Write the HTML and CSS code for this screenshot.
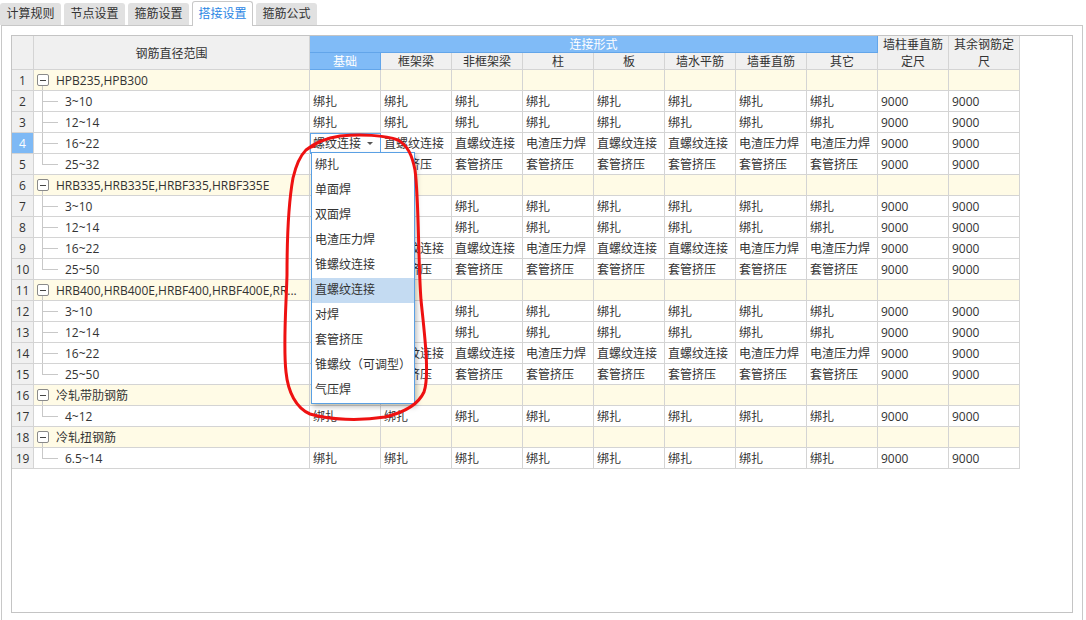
FILE: index.html
```html
<!DOCTYPE html>
<html lang="zh">
<head>
<meta charset="utf-8">
<title>搭接设置</title>
<link rel="stylesheet" href="styles.css">
</head>
<body>
<div class="tabs">
  <div class="tab">计算规则</div>
  <div class="tab">节点设置</div>
  <div class="tab">箍筋设置</div>
  <div class="tab active">搭接设置</div>
  <div class="tab">箍筋公式</div>
</div>
<div class="panel">
  <div class="box">
    <div class="grid">
      <div class="h r2"></div>
      <div class="h r2">钢筋直径范围</div>
      <div class="h hb span8">连接形式</div>
      <div class="h r2">墙柱垂直筋定尺</div>
      <div class="h r2">其余钢筋定尺</div>
      <div class="h hb">基础</div>
      <div class="h">框架梁</div>
      <div class="h">非框架梁</div>
      <div class="h">柱</div>
      <div class="h">板</div>
      <div class="h">墙水平筋</div>
      <div class="h">墙垂直筋</div>
      <div class="h">其它</div>

      <!-- 1 -->
      <div class="rn">1</div><div class="nm g"><i class="tg"></i>HPB235,HPB300</div>
      <div class="c g"></div><div class="c g"></div><div class="c g"></div><div class="c g"></div><div class="c g"></div><div class="c g"></div><div class="c g"></div><div class="c g"></div><div class="c g"></div><div class="c g"></div>
      <!-- 2 -->
      <div class="rn">2</div><div class="nm"><i class="br"></i>3~10</div>
      <div class="c">绑扎</div><div class="c">绑扎</div><div class="c">绑扎</div><div class="c">绑扎</div><div class="c">绑扎</div><div class="c">绑扎</div><div class="c">绑扎</div><div class="c">绑扎</div><div class="c">9000</div><div class="c">9000</div>
      <!-- 3 -->
      <div class="rn">3</div><div class="nm"><i class="br"></i>12~14</div>
      <div class="c">绑扎</div><div class="c">绑扎</div><div class="c">绑扎</div><div class="c">绑扎</div><div class="c">绑扎</div><div class="c">绑扎</div><div class="c">绑扎</div><div class="c">绑扎</div><div class="c">9000</div><div class="c">9000</div>
      <!-- 4 -->
      <div class="rn on">4</div><div class="nm"><i class="br"></i>16~22</div>
      <div class="c sel">
        <div class="combo"><span>螺纹连接</span><i class="caret"></i></div>
        <div class="dd">
          <div class="it">绑扎</div>
          <div class="it">单面焊</div>
          <div class="it">双面焊</div>
          <div class="it">电渣压力焊</div>
          <div class="it">锥螺纹连接</div>
          <div class="it hl">直螺纹连接</div>
          <div class="it">对焊</div>
          <div class="it">套管挤压</div>
          <div class="it">锥螺纹（可调型）</div>
          <div class="it">气压焊</div>
        </div>
      </div>
      <div class="c">直螺纹连接</div><div class="c">直螺纹连接</div><div class="c">电渣压力焊</div><div class="c">直螺纹连接</div><div class="c">直螺纹连接</div><div class="c">电渣压力焊</div><div class="c">电渣压力焊</div><div class="c">9000</div><div class="c">9000</div>
      <!-- 5 -->
      <div class="rn">5</div><div class="nm"><i class="br last"></i>25~32</div>
      <div class="c"></div><div class="c">套管挤压</div><div class="c">套管挤压</div><div class="c">套管挤压</div><div class="c">套管挤压</div><div class="c">套管挤压</div><div class="c">套管挤压</div><div class="c">套管挤压</div><div class="c">9000</div><div class="c">9000</div>
      <!-- 6 -->
      <div class="rn">6</div><div class="nm g"><i class="tg"></i>HRB335,HRB335E,HRBF335,HRBF335E</div>
      <div class="c g"></div><div class="c g"></div><div class="c g"></div><div class="c g"></div><div class="c g"></div><div class="c g"></div><div class="c g"></div><div class="c g"></div><div class="c g"></div><div class="c g"></div>
      <!-- 7 -->
      <div class="rn">7</div><div class="nm"><i class="br"></i>3~10</div>
      <div class="c"></div><div class="c"></div><div class="c">绑扎</div><div class="c">绑扎</div><div class="c">绑扎</div><div class="c">绑扎</div><div class="c">绑扎</div><div class="c">绑扎</div><div class="c">9000</div><div class="c">9000</div>
      <!-- 8 -->
      <div class="rn">8</div><div class="nm"><i class="br"></i>12~14</div>
      <div class="c"></div><div class="c"></div><div class="c">绑扎</div><div class="c">绑扎</div><div class="c">绑扎</div><div class="c">绑扎</div><div class="c">绑扎</div><div class="c">绑扎</div><div class="c">9000</div><div class="c">9000</div>
      <!-- 9 -->
      <div class="rn">9</div><div class="nm"><i class="br"></i>16~22</div>
      <div class="c"></div><div class="c">直螺纹连接</div><div class="c">直螺纹连接</div><div class="c">电渣压力焊</div><div class="c">直螺纹连接</div><div class="c">直螺纹连接</div><div class="c">电渣压力焊</div><div class="c">电渣压力焊</div><div class="c">9000</div><div class="c">9000</div>
      <!-- 10 -->
      <div class="rn">10</div><div class="nm"><i class="br last"></i>25~50</div>
      <div class="c"></div><div class="c">套管挤压</div><div class="c">套管挤压</div><div class="c">套管挤压</div><div class="c">套管挤压</div><div class="c">套管挤压</div><div class="c">套管挤压</div><div class="c">套管挤压</div><div class="c">9000</div><div class="c">9000</div>
      <!-- 11 -->
      <div class="rn">11</div><div class="nm g"><i class="tg"></i>HRB400,HRB400E,HRBF400,HRBF400E,RR...</div>
      <div class="c g"></div><div class="c g"></div><div class="c g"></div><div class="c g"></div><div class="c g"></div><div class="c g"></div><div class="c g"></div><div class="c g"></div><div class="c g"></div><div class="c g"></div>
      <!-- 12 -->
      <div class="rn">12</div><div class="nm"><i class="br"></i>3~10</div>
      <div class="c"></div><div class="c"></div><div class="c">绑扎</div><div class="c">绑扎</div><div class="c">绑扎</div><div class="c">绑扎</div><div class="c">绑扎</div><div class="c">绑扎</div><div class="c">9000</div><div class="c">9000</div>
      <!-- 13 -->
      <div class="rn">13</div><div class="nm"><i class="br"></i>12~14</div>
      <div class="c"></div><div class="c"></div><div class="c">绑扎</div><div class="c">绑扎</div><div class="c">绑扎</div><div class="c">绑扎</div><div class="c">绑扎</div><div class="c">绑扎</div><div class="c">9000</div><div class="c">9000</div>
      <!-- 14 -->
      <div class="rn">14</div><div class="nm"><i class="br"></i>16~22</div>
      <div class="c"></div><div class="c">直螺纹连接</div><div class="c">直螺纹连接</div><div class="c">电渣压力焊</div><div class="c">直螺纹连接</div><div class="c">直螺纹连接</div><div class="c">电渣压力焊</div><div class="c">电渣压力焊</div><div class="c">9000</div><div class="c">9000</div>
      <!-- 15 -->
      <div class="rn">15</div><div class="nm"><i class="br last"></i>25~50</div>
      <div class="c"></div><div class="c">套管挤压</div><div class="c">套管挤压</div><div class="c">套管挤压</div><div class="c">套管挤压</div><div class="c">套管挤压</div><div class="c">套管挤压</div><div class="c">套管挤压</div><div class="c">9000</div><div class="c">9000</div>
      <!-- 16 -->
      <div class="rn">16</div><div class="nm g"><i class="tg"></i>冷轧带肋钢筋</div>
      <div class="c g"></div><div class="c g"></div><div class="c g"></div><div class="c g"></div><div class="c g"></div><div class="c g"></div><div class="c g"></div><div class="c g"></div><div class="c g"></div><div class="c g"></div>
      <!-- 17 -->
      <div class="rn">17</div><div class="nm"><i class="br last"></i>4~12</div>
      <div class="c">绑扎</div><div class="c">绑扎</div><div class="c">绑扎</div><div class="c">绑扎</div><div class="c">绑扎</div><div class="c">绑扎</div><div class="c">绑扎</div><div class="c">绑扎</div><div class="c">9000</div><div class="c">9000</div>
      <!-- 18 -->
      <div class="rn">18</div><div class="nm g"><i class="tg"></i>冷轧扭钢筋</div>
      <div class="c g"></div><div class="c g"></div><div class="c g"></div><div class="c g"></div><div class="c g"></div><div class="c g"></div><div class="c g"></div><div class="c g"></div><div class="c g"></div><div class="c g"></div>
      <!-- 19 -->
      <div class="rn">19</div><div class="nm"><i class="br last"></i>6.5~14</div>
      <div class="c">绑扎</div><div class="c">绑扎</div><div class="c">绑扎</div><div class="c">绑扎</div><div class="c">绑扎</div><div class="c">绑扎</div><div class="c">绑扎</div><div class="c">绑扎</div><div class="c">9000</div><div class="c">9000</div>
    </div>
  </div>
</div>
<svg class="mark" width="1086" height="620" viewBox="0 0 1086 620">
  <path d="M 314 146 C 310 147, 308 148, 306 150 C 300 156, 296 165, 293 178 C 289 200, 287 240, 287 275 C 286 310, 283 345, 286 372 C 288 392, 296 408, 310 414 C 330 420, 360 421, 385 417 C 402 413, 418 405, 424 392 C 430 375, 424 330, 421 300 C 418 260, 419 200, 415 170 C 412 155, 408 146, 398 140 C 385 135, 360 134, 340 136 C 326 138, 316 142, 306 150"/>
</svg>
</body>
</html>
```

FILE: styles.css
```css
* { box-sizing: border-box; }
html, body { margin: 0; padding: 0; }
body {
  width: 1086px;
  height: 620px;
  overflow: hidden;
  background: #fff;
  font-family: "Open Sans", "Noto Sans CJK SC", sans-serif;
  font-size: 12px;
  color: #333;
  position: relative;
}

.tabs {
  display: flex;
  gap: 3px;
  height: 25px;
  align-items: flex-end;
  position: relative;
  z-index: 2;
}
.tab {
  width: 61px;
  height: 22px;
  line-height: 22px;
  text-align: center;
  background: #e1e1e1;
  border-radius: 3px 3px 0 0;
  color: #333;
}
.tab.active {
  height: 25px;
  line-height: 24px;
  margin-bottom: -1px;
  background: #fff;
  border: 1px solid #c8c8c8;
  border-bottom: none;
  color: #2b86e4;
}

.panel {
  margin-left: 1px;
  width: 1082px;
  height: 600px;
  border: 1px solid #c8c8c8;
  padding: 9px;
}
.box {
  width: 1062px;
  height: 578px;
  border: 1px solid #c4c4c4;
}

.grid {
  display: grid;
  grid-template-columns: 22px 276px repeat(10, 71px);
  grid-template-rows: 17px 17px repeat(19, 21px);
  width: 1008px;
}
.grid > div {
  border-right: 1px solid #d4d4d4;
  border-bottom: 1px solid #d4d4d4;
}

.h {
  background: #f0f0f0;
  display: flex;
  align-items: center;
  justify-content: center;
  text-align: center;
  line-height: 17px;
  padding-top: 1px;
  color: #333;
}
.r2 { grid-row: span 2; }
.span8 { grid-column: span 8; }
.grid > .hb {
  background: #80bbf7;
  color: #fff;
  border-color: #62a5ea;
}

.rn {
  background: #f0f0f0;
  text-align: center;
  line-height: 19px;
  padding-top: 1px;
}
.grid > .rn.on {
  background: #7eb9f5;
  color: #fff;
}

.nm {
  display: flex;
  align-items: center;
  white-space: nowrap;
  overflow: hidden;
  line-height: 18px;
  padding-top: 2px;
}
.g { background: #fffbe6; }

.c {
  padding: 1px 0 0 3px;
  line-height: 19px;
  white-space: nowrap;
  overflow: hidden;
}

.tg {
  flex: none;
  position: relative;
  width: 12px;
  height: 12px;
  margin: -2px 7px 0 3px;
  border: 1px solid #8a8a8a;
  border-radius: 2px;
  background: #fff linear-gradient(#444, #444) center / 6px 1px no-repeat;
}
.tg::after {
  content: "";
  position: absolute;
  left: 4px;
  top: 11px;
  height: 5px;
  border-left: 1px solid #c8c8c8;
}

.br {
  flex: none;
  align-self: stretch;
  width: 16px;
  margin: -2px 7px 0 8px;
  border-left: 1px solid #c8c8c8;
  background: linear-gradient(#c8c8c8, #c8c8c8) 0 50% / 100% 1px no-repeat;
}
.br.last {
  align-self: flex-start;
  height: 11px;
  border-bottom: 1px solid #c8c8c8;
  background: none;
}

.grid > .sel {
  position: relative;
  z-index: 5;
  overflow: visible;
  padding: 0;
  border: 1px solid #62a6ea;
}
.combo {
  display: flex;
  align-items: center;
  justify-content: space-between;
  height: 100%;
  padding: 0 7px 0 2px;
  line-height: 18px;
}
.caret {
  width: 0;
  height: 0;
  border-left: 3px solid transparent;
  border-right: 3px solid transparent;
  border-top: 3px solid #555;
}
.dd {
  position: absolute;
  left: 0;
  top: 18px;
  width: 104px;
  background: #fff;
  border: 1px solid #5aa0e4;
  box-shadow: 2px 3px 5px rgba(0, 0, 0, 0.25);
}
.it {
  height: 25px;
  line-height: 24px;
  padding-left: 3px;
  color: #333;
}
.it.hl { background: #c4dbf2; }

.mark {
  position: absolute;
  left: 0;
  top: 0;
  z-index: 10;
  pointer-events: none;
}
.mark path {
  fill: none;
  stroke: #ee1111;
  stroke-width: 3;
  stroke-linecap: round;
  stroke-linejoin: round;
}
```
